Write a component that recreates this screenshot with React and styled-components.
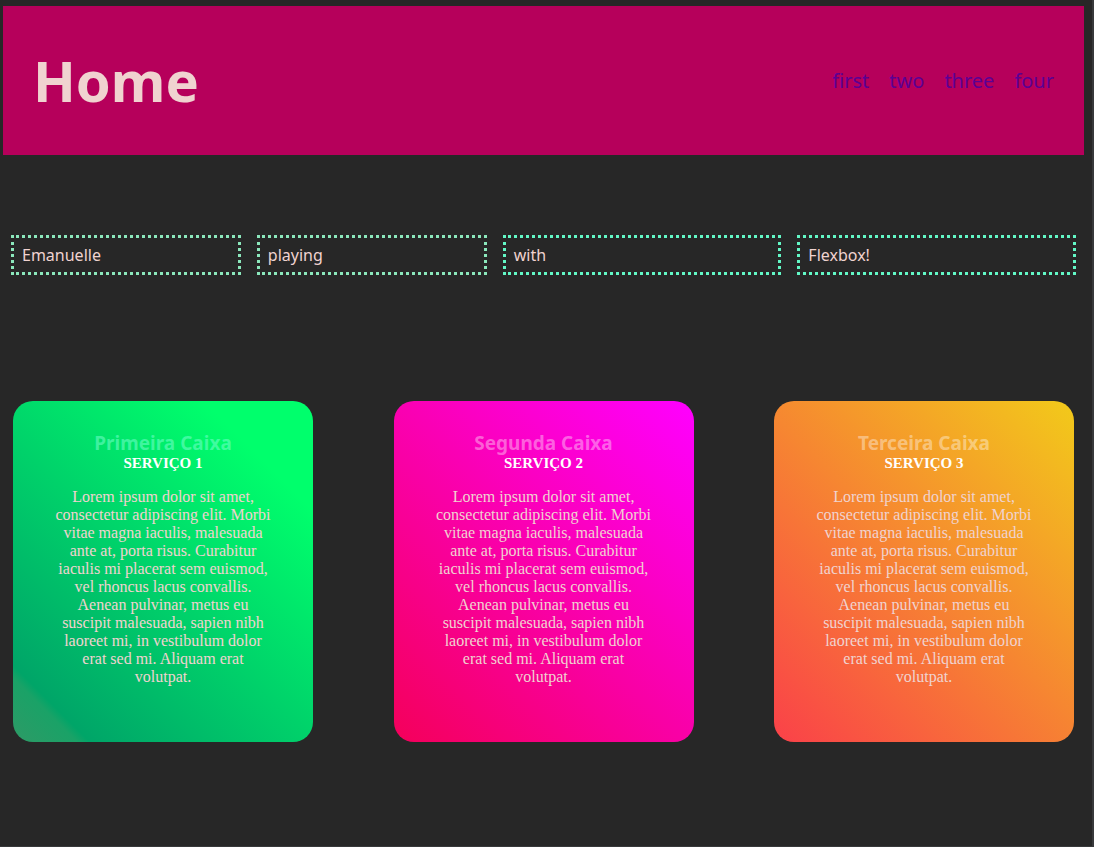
import React from "react";
import styled, { createGlobalStyle } from "styled-components";

const GlobalStyle = createGlobalStyle`
  *, *::before, *::after { box-sizing: border-box; }
  body { margin: 0; background: #272727; }
`;

const Page = styled.div`
  min-height: 100vh;
  padding: 6px 8px 0 3px;
  border-right: 2px solid #38393b;
  border-bottom: 1px solid #38393b;
  color: #f0d3d0;
  font-family: "Liberation Serif", serif;
  font-size: 16px;
  line-height: 18px;
`;

const Header = styled.header`
  display: flex;
  align-items: center;
  justify-content: space-between;
  padding: 40px 30px;
  background: #b6005b;
  font-family: "Noto Sans", sans-serif;
`;

const Logo = styled.h1`
  margin: 0;
  font-size: 56px;
  line-height: 69px;
  font-weight: 700;
`;

const Nav = styled.nav`
  display: flex;
  gap: 20px;
`;

const NavLink = styled.a`
  color: #5b0094;
  font-size: 20px;
  line-height: 24px;
  text-decoration: none;
`;

const Words = styled.section`
  display: grid;
  grid-template-columns: 33fr 33fr 40fr 40fr;
  gap: 16px;
  margin-top: 80px;
  padding: 0 8px;
  font-family: "Noto Sans", sans-serif;
`;

const Word = styled.div`
  padding: 8px;
  border: 3px dotted ${(p) => p.$color};
`;

const Cards = styled.main`
  display: flex;
  flex-wrap: wrap;
  justify-content: space-between;
  margin-top: 126px;
  padding: 0 10px;
`;

const Card = styled.article`
  width: 300px;
  padding: 30px 40px 56px;
  border-radius: 20px;
  background: ${(p) => p.$fill};
  text-align: center;
`;

const CardTitle = styled.h2`
  margin: 0;
  color: ${(p) => p.$color};
  font-family: "Noto Sans", sans-serif;
  font-size: 19px;
  line-height: 24px;
`;

const CardSubtitle = styled.h3`
  margin: 0;
  color: #fff;
  font-size: 15px;
  line-height: 17px;
  text-transform: uppercase;
`;

const CardText = styled.p`
  margin: 16px 0 0;
`;

const links = ["first", "two", "three", "four"];

const words = [
  { text: "Emanuelle", color: "#8be8bc" },
  { text: "playing", color: "#8be8bc" },
  { text: "with", color: "#62f8c6" },
  { text: "Flexbox!", color: "#62f8c6" },
];

const cards = [
  {
    title: "Primeira Caixa",
    subtitle: "Serviço 1",
    titleColor: "rgba(127, 255, 212, 0.5)",
    fill: "linear-gradient(45deg, #2e9a66 0%, #1aa267 10%, #00a568 12%, #00ff6c 83%)",
  },
  {
    title: "Segunda Caixa",
    subtitle: "Serviço 2",
    titleColor: "rgba(255, 255, 255, 0.38)",
    fill: "linear-gradient(45deg, #f4005a, #ff00ff)",
  },
  {
    title: "Terceira Caixa",
    subtitle: "Serviço 3",
    titleColor: "rgba(255, 255, 255, 0.4)",
    fill: "linear-gradient(45deg, #fa4149, #f2ca1a)",
  },
];

const lorem =
  "Lorem ipsum dolor sit amet, consectetur adipiscing elit. Morbi vitae magna iaculis, malesuada ante at, porta risus. Curabitur iaculis mi placerat sem euismod, vel rhoncus lacus convallis. Aenean pulvinar, metus eu suscipit malesuada, sapien nibh laoreet mi, in vestibulum dolor erat sed mi. Aliquam erat volutpat.";

export default function App() {
  return (
    <Page>
      <GlobalStyle />
      <Header>
        <Logo>Home</Logo>
        <Nav>
          {links.map((name) => (
            <NavLink key={name} href={`#${name}`}>{name}</NavLink>
          ))}
        </Nav>
      </Header>
      <Words>
        {words.map((w) => (
          <Word key={w.text} $color={w.color}>{w.text}</Word>
        ))}
      </Words>
      <Cards>
        {cards.map((c) => (
          <Card key={c.title} $fill={c.fill}>
            <CardTitle $color={c.titleColor}>{c.title}</CardTitle>
            <CardSubtitle>{c.subtitle}</CardSubtitle>
            <CardText>{lorem}</CardText>
          </Card>
        ))}
      </Cards>
    </Page>
  );
}
